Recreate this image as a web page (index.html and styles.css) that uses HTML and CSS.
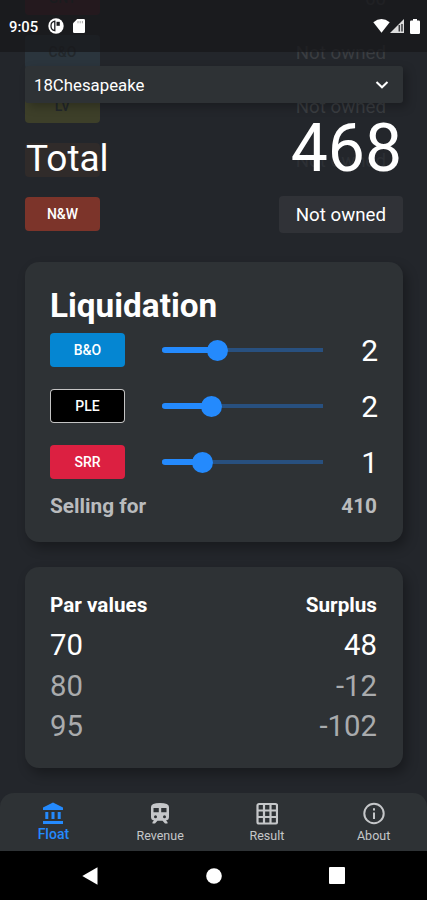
FILE: index.html
```html
<!DOCTYPE html>
<html lang="en">
  <head>
    <meta charset="UTF-8" />
    <meta name="viewport" content="width=device-width, initial-scale=1.0" />
    <title>18xx Float</title>
    <link rel="stylesheet" href="styles.css">
  </head>
  <body>
    <div class="screen">
      <!-- Header stays on top of the scrolled content -->
      <header class="header">
        <div class="status-bar">
          <span class="clock">9:05</span>
          <svg class="status-app" width="16" height="16" viewBox="0 0 16 16">
            <circle cx="8" cy="8" r="7.7" fill="#fff" />
            <path d="M6.800 3.200A4.800 4.800 0 0 0 6.800 12.600Z" fill="none" stroke="#1c1d20" stroke-width="1.300" />
            <path d="M8.500 3.800H11.800V7.800H8.500Z" fill="#1c1d20" />
          </svg>
          <svg class="status-card" width="12" height="14" viewBox="0 0 12 14">
            <path d="M4.2 0H10.8Q12 0 12 1.2V12.8Q12 14 10.8 14H1.2Q0 14 0 12.8V4.2Z" fill="#fff" />
            <path d="M5 2V4.3M7.2 2V4.3M9.4 2V4.3" stroke="#aaa" stroke-width="1" />
          </svg>
          <div class="status-right">
            <svg width="17" height="14" viewBox="0 0 17 14">
              <path d="M0.3 3.2Q8.5 -3 16.7 3.2L8.5 13.7Z" fill="#fff" />
            </svg>
            <svg width="14" height="14" viewBox="0 0 14 14">
              <path d="M14 0V14H0Z" fill="#ddd" />
              <path d="M9.3 6V12.5M12 5V12.5" stroke="#3a3b3e" stroke-width="1.5" />
            </svg>
            <svg class="battery" width="10" height="15" viewBox="0 0 10 15">
              <path d="M3 0H7V1.5H8.8Q10 1.5 10 2.8V13.7Q10 15 8.8 15H1.2Q0 15 0 13.7V2.8Q0 1.5 1.2 1.5H3Z" fill="#fff" />
            </svg>
          </div>
        </div>
        <div class="game-select">
          <span>18Chesapeake</span>
          <svg width="14" height="10" viewBox="0 0 14 10">
            <path d="M1.5 2L7 7.3L12.5 2" fill="none" stroke="#fff" stroke-width="2" />
          </svg>
        </div>
        <div class="total">
          <span class="total-label">Total</span>
          <span class="total-value">468</span>
        </div>
      </header>

      <main class="content">
        <div class="companies">
          <div class="company faded">
            <span class="chip gt">GNT</span>
            <span class="owned">60</span>
          </div>
          <div class="company faded">
            <span class="chip co">C&amp;O</span>
            <span class="owned">Not owned</span>
          </div>
          <div class="company faded">
            <span class="chip lv">LV</span>
            <span class="owned">Not owned</span>
          </div>
          <div class="company faded hidden-label">
            <span class="chip cv"></span>
            <span class="owned">Not owned</span>
          </div>
          <div class="company">
            <span class="chip nw">N&amp;W</span>
            <span class="owned">Not owned</span>
          </div>
        </div>

        <section class="card liquidation">
          <h1>Liquidation</h1>
          <div class="private">
            <span class="chip bo">B&amp;O</span>
            <div class="slider"><div class="fill" style="width: 56px"></div></div>
            <span class="count">2</span>
          </div>
          <div class="private">
            <span class="chip ple">PLE</span>
            <div class="slider"><div class="fill" style="width: 50px"></div></div>
            <span class="count">2</span>
          </div>
          <div class="private">
            <span class="chip srr">SRR</span>
            <div class="slider"><div class="fill" style="width: 41px"></div></div>
            <span class="count">1</span>
          </div>
          <div class="selling">
            <span>Selling for</span>
            <span>410</span>
          </div>
        </section>

        <section class="card par">
          <div class="par-row par-head"><span>Par values</span><span>Surplus</span></div>
          <div class="par-row"><span>70</span><span>48</span></div>
          <div class="par-row muted"><span>80</span><span>-12</span></div>
          <div class="par-row muted"><span>95</span><span>-102</span></div>
        </section>
      </main>

      <nav class="tabs">
        <a class="tab active">
          <svg width="22" height="23" viewBox="0 0 22 23">
            <path d="M11 0.5L21 5.5V8H1V5.5Z M3.3 10H6.3V17H3.3Z M9.5 10H12.5V17H9.5Z M15.7 10H18.7V17H15.7Z M1 19H21V22H1Z" fill="currentColor" />
          </svg>
          <span>Float</span>
        </a>
        <a class="tab">
          <svg width="22" height="23" viewBox="0 0 22 23">
            <path fill-rule="evenodd" d="M2 5Q2 1 11 1T20 5V15Q20 18 17 18.5L18.5 20V21.5H16L13.5 18.8H8.5L6 21.5H3.500V20L5 18.500Q2 18 2 15ZM4.500 6V10.300H9.800V6ZM12.200 6V10.300H17.500V6ZM6.500 13.200A1.500 1.500 0 1 0 6.500 16.200A1.500 1.500 0 1 0 6.500 13.200ZM15.500 13.200A1.500 1.500 0 1 0 15.500 16.200A1.500 1.500 0 1 0 15.500 13.200Z" fill="currentColor" />
          </svg>
          <span>Revenue</span>
        </a>
        <a class="tab">
          <svg width="22" height="23" viewBox="0 0 22 23">
            <rect x="1.500" y="2" width="19.500" height="19.500" rx="1.500" fill="none" stroke="currentColor" stroke-width="2.200" />
            <path d="M8 2V22M14.500 2V22M1 8.500H21M1 15H21" stroke="currentColor" stroke-width="2.200" />
          </svg>
          <span>Result</span>
        </a>
        <a class="tab">
          <svg width="22" height="23" viewBox="0 0 22 23">
            <circle cx="11" cy="11.500" r="9.700" fill="none" stroke="currentColor" stroke-width="2" />
            <path d="M11 10.500V17M11 6.300V8.500" stroke="currentColor" stroke-width="2" />
          </svg>
          <span>About</span>
        </a>
      </nav>

      <div class="system-nav">
        <svg width="16" height="18" viewBox="0 0 16 18"><path d="M15.500 0.300V17.700L0.300 9Z" fill="#fff" /></svg>
        <svg width="16" height="16" viewBox="0 0 16 16"><circle cx="8" cy="8" r="7.800" fill="#fff" /></svg>
        <svg width="16" height="17" viewBox="0 0 16 17"><rect width="16" height="17" rx="1" fill="#fff" /></svg>
      </div>
    </div>
  </body>
</html>
```

FILE: styles.css
```css
* {
  box-sizing: border-box;
}

body {
  margin: 0;
  background-color: #23262b;
  color: #fff;
  font-family: Roboto, sans-serif;
}

svg {
  display: block;
  flex: none;
}

.screen {
  position: relative;
  display: flex;
  flex-direction: column;
  width: 427px;
  height: 900px;
  overflow: hidden;
}

.header {
  position: absolute;
  top: 0;
  left: 0;
  width: 100%;
  z-index: 1;
}

.status-bar {
  display: flex;
  align-items: center;
  height: 52px;
  padding: 0 7px 0 9px;
  background-color: rgba(24, 24, 27, 0.75);
}

.clock {
  width: 39px;
  padding-top: 1px;
  font-size: 14.800px;
  font-weight: 500;
}

.status-card {
  margin-left: 9px;
}

.status-right {
  display: flex;
  align-items: center;
  margin-left: auto;
}

.battery {
  margin-left: 6px;
}

.game-select {
  display: flex;
  align-items: center;
  justify-content: space-between;
  height: 37px;
  margin: 14px 24px 0 25px;
  padding: 0 14px 0 9px;
  background-color: #2e3235;
  border-radius: 3px;
  box-shadow: 4px 4px 10px rgba(0, 0, 0, 0.250);
  font-size: 16.800px;
}

.total {
  display: flex;
  align-items: baseline;
  justify-content: space-between;
  height: 80px;
  padding: 1px 25px 0 26px;
}

.total-label {
  font-size: 37px;
}

.total-value {
  font-size: 66px;
  line-height: 90px;
}

.content {
  flex: 1;
  min-height: 0;
  padding: 0 24px 0 25px;
  overflow: hidden;
}

.companies {
  margin: -29px 0 21px;
}

.company {
  display: flex;
  align-items: center;
  justify-content: space-between;
  height: 54px;
}

.chip {
  width: 75px;
  height: 34px;
  border-radius: 4px;
  font-size: 14px;
  font-weight: 500;
  line-height: 34px;
  text-align: center;
}

.owned {
  width: 124px;
  height: 37px;
  padding-right: 17px;
  border-radius: 4px;
  background-color: #303237;
  font-size: 18.700px;
  line-height: 38px;
  text-align: right;
}

.faded .chip {
  color: #22272b;
}

.faded .owned {
  background-color: transparent;
  color: #3a3d41;
}

.gt {
  background-color: #4a1c2b;
}

.co {
  background-color: #2b353d;
}

.lv {
  background-color: #3d3f29;
}

.cv {
  background-color: #302b2a;
}

.nw {
  background-color: #7c342a;
}

.bo {
  background-color: #0586d2;
}

.ple {
  background-color: #000;
  box-shadow: inset 0 0 0 1px #c4c4c4;
}

.srr {
  background-color: #dc2041;
}

.hidden-label .owned {
  color: #2d3035;
}

.card {
  padding: 25px;
  background-color: #2e3235;
  border-radius: 14px;
  box-shadow: 4px 6px 12px rgba(0, 0, 0, 0.300);
}

.liquidation {
  height: 280px;
}

.liquidation h1 {
  margin: 0;
  font-size: 33.300px;
  line-height: 38px;
}

.private {
  display: flex;
  align-items: center;
  height: 34px;
  margin: 8px 0 22px;
}

.private + .private {
  margin-top: 0;
}

.slider {
  display: flex;
  align-items: center;
  width: 161px;
  height: 20px;
  margin-left: 37px;
  background: linear-gradient(#28507f, #28507f) center / 100% 4px no-repeat;
}

.fill {
  display: flex;
  align-items: center;
  justify-content: flex-end;
  height: 6px;
  border-radius: 3px;
  background-color: #248afd;
}

.fill::after {
  content: "";
  flex: none;
  width: 21px;
  height: 21px;
  margin-right: -10px;
  border-radius: 50%;
  background-color: #248afd;
}

.count {
  margin-left: auto;
  font-size: 30px;
}

.selling {
  display: flex;
  justify-content: space-between;
  margin-top: -6px;
  padding-right: 1px;
  color: #b9bbbd;
  font-size: 20.800px;
  font-weight: 700;
  line-height: 23px;
}

.par {
  height: 201px;
  margin-top: 25px;
}

.par-row {
  display: flex;
  justify-content: space-between;
  padding-right: 1px;
  font-size: 29.300px;
  line-height: 40.500px;
}

.par-head {
  font-size: 20.700px;
  font-weight: 700;
  line-height: 26px;
  margin-bottom: 7px;
}

.muted {
  color: #a9abad;
}

.tabs {
  display: flex;
  height: 58px;
  background-color: #2e3235;
  border-radius: 14px 14px 0 0;
}

.tab {
  display: flex;
  flex: 1;
  flex-direction: column;
  align-items: center;
  padding-top: 9px;
  color: #c5c7c9;
  font-size: 12.500px;
  line-height: 21px;
}

.tab.active {
  color: #248afd;
  font-size: 14px;
  font-weight: 500;
  line-height: 19px;
}

.system-nav {
  display: flex;
  align-items: center;
  justify-content: space-between;
  height: 49px;
  padding: 0 82px;
  background-color: #000;
}
```
